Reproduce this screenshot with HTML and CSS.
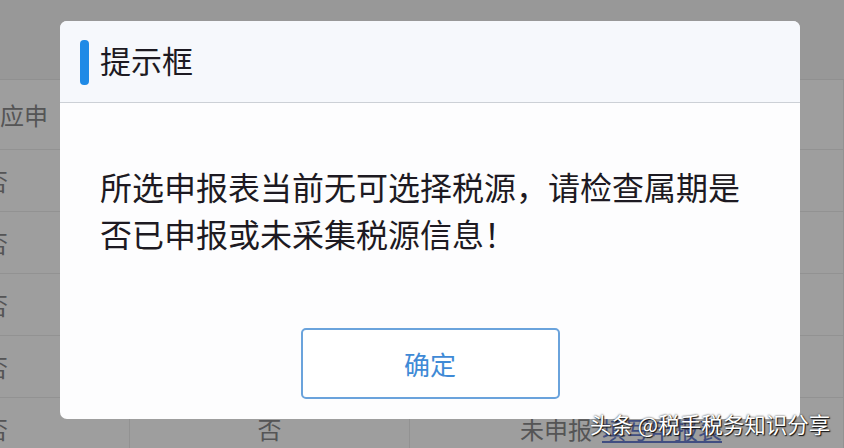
FILE: index.html
```html
<!DOCTYPE html>
<html lang="zh-CN">
<head>
<meta charset="utf-8">
<link rel="stylesheet" href="styles.css">
</head>
<body>
<div class="page">
  <div class="toprow"></div>
  <div class="row row-head"><div class="c1"><span class="cut-a">是否应申</span></div><div class="c2"></div><div class="c3"></div></div>
  <div class="row"><div class="c1"><span class="cut-b">否</span></div><div class="c2"></div><div class="c3"></div></div>
  <div class="row"><div class="c1"><span class="cut-b">否</span></div><div class="c2"></div><div class="c3"></div></div>
  <div class="row"><div class="c1"><span class="cut-b">否</span></div><div class="c2"></div><div class="c3"></div></div>
  <div class="row"><div class="c1"><span class="cut-b">否</span></div><div class="c2"></div><div class="c3"></div></div>
  <div class="row"><div class="c1"><span class="cut-b">否</span></div><div class="c2 center">否</div><div class="c3"><span class="status">未申报</span><span class="link">填写申报表</span></div></div>
</div>
<div class="overlay"></div>
<div class="dialog">
  <div class="dialog-head">
    <span class="bar"></span>
    <span class="title">提示框</span>
  </div>
  <div class="dialog-body">
    <p class="msg">所选申报表当前无可选择税源，请检查属期是否已申报或未采集税源信息！</p>
    <button class="ok">确定</button>
  </div>
</div>
<div class="watermark">头条 @税手税务知识分享</div>
</body>
</html>
```

FILE: styles.css
```css
* { box-sizing: border-box; }
html, body { margin: 0; padding: 0; }
body {
  width: 844px;
  height: 448px;
  overflow: hidden;
  position: relative;
  font-family: "Noto Sans CJK SC", "Noto Sans", sans-serif;
  background: #ffffff;
}
.page {
  display: flex;
  flex-direction: column;
  color: #8a8a8c;
  font-size: 24px;
}
.toprow { height: 80px; background: #f6f6f6; border-bottom: 1px solid #e9e9e9; }
.row {
  display: grid;
  grid-template-columns: 130px 280px 1fr;
  height: 62px;
  border-bottom: 1px solid #ececec;
  flex: none;
}
.row-head { height: 70px; }
.row > div { display: flex; align-items: center; overflow: hidden; border-right: 1px solid #ececec; }
.cut-a { margin-left: -48px; white-space: nowrap; }
.cut-b { margin-left: -16px; }
.center { justify-content: center; }
.c3 { padding-left: 110px; gap: 10px; }
.link { color: #6a7fd0; text-decoration: underline; }

.overlay {
  position: absolute;
  inset: 0;
  background: rgba(0, 0, 0, 0.38);
}
.dialog {
  position: absolute;
  left: 60px;
  top: 21px;
  width: 740px;
  height: 398px;
  background: #fdfdfe;
  border-radius: 7px;
  overflow: hidden;
  display: flex;
  flex-direction: column;
}
.dialog-head {
  height: 82px;
  flex: none;
  background: #f6f8fc;
  border-bottom: 1px solid #ccd0d6;
  display: flex;
  align-items: center;
  padding-left: 20px;
  gap: 11px;
}
.bar {
  width: 9px;
  height: 45px;
  border-radius: 4px;
  background: #1f8ae6;
  margin-top: 1px;
}
.title {
  font-size: 31px;
  color: #1d1a22;
  line-height: 1;
  margin-top: -4px;
}
.dialog-body {
  flex: 1;
  display: flex;
  flex-direction: column;
  padding: 60px 40px 20px 40px;
}
.msg {
  margin: 0;
  font-size: 32px;
  line-height: 47px;
  color: #1d1a22;
  width: 660px;
}
.ok {
  margin-top: auto;
  align-self: center;
  width: 259px;
  height: 71px;
  border: 2px solid #6aa3dc;
  border-radius: 5px;
  background: #ffffff;
  color: #3f8ad6;
  font-family: "Noto Sans CJK SC", sans-serif;
  font-size: 26px;
  padding: 0;
}
.watermark {
  position: absolute;
  left: 590px;
  top: 408px;
  font-size: 21.5px;
  color: #ffffff;
  white-space: nowrap;
  text-shadow: 1px 1px 1px #111, 0 0 2px #222;
}
```
